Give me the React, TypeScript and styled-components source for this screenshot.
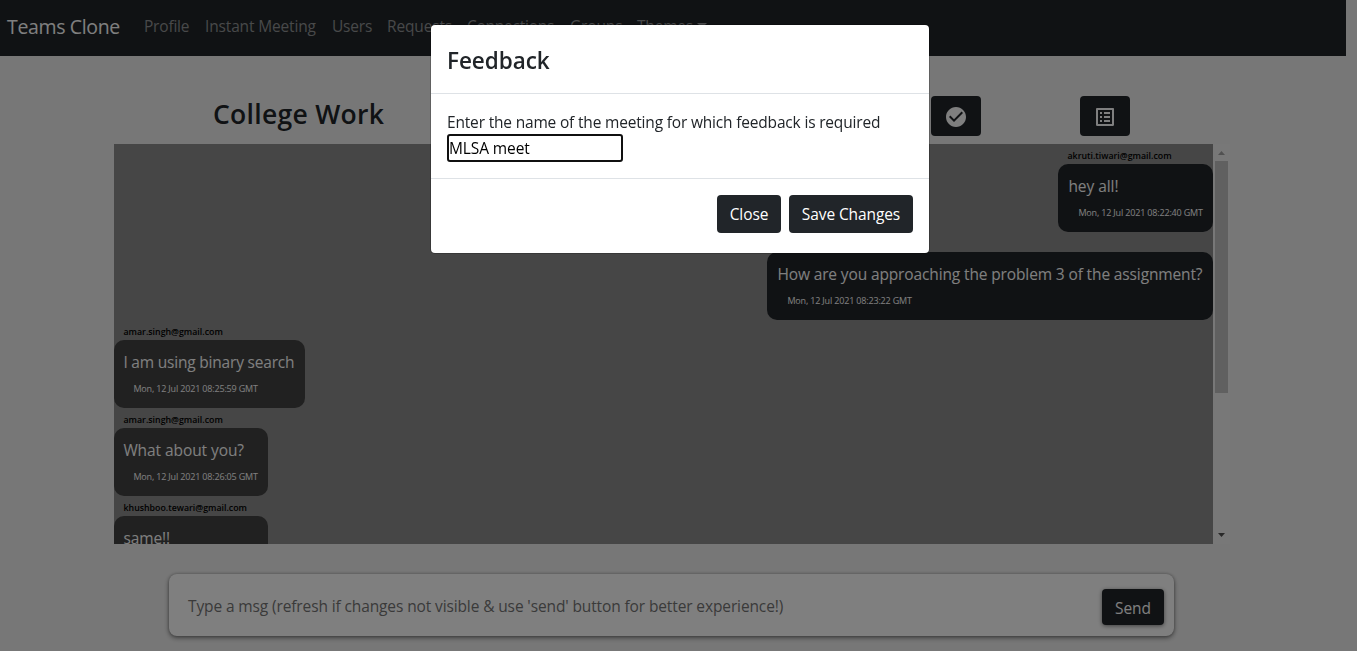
import React from "react";
import styled, { createGlobalStyle } from "styled-components";
import { MdCheckCircle, MdListAlt } from "react-icons/md";

const Global = createGlobalStyle`
  *, *::before, *::after { box-sizing: border-box; }
  html, body, #root { height: 100%; }
  body {
    margin: 0;
    overflow: hidden;
    background: #efefef;
    color: #212529;
    font: 400 15.5px/24px "Open Sans", "Noto Sans", sans-serif;
  }
  h2, h4, p { margin: 0; }
`;

const Page = styled.div`
  height: 100%;
  overflow: hidden;
`;

const Navbar = styled.nav`
  display: flex;
  align-items: center;
  width: 1346px;
  height: 56px;
  padding: 0 7px 4px;
  background: #212529;
`;

const Brand = styled.a`
  width: 129px;
  padding-top: 2px;
  font-size: 19.5px;
  letter-spacing: -0.35px;
  color: #fff;
  white-space: nowrap;
`;

const NavLink = styled.a<{ $width: number; $spacing?: number }>`
  display: flex;
  align-items: flex-start;
  width: ${(p) => p.$width}px;
  padding-left: 8px;
  letter-spacing: ${(p) => p.$spacing ?? 0}px;
  color: #909294;
  white-space: nowrap;
`;

const Caret = styled.span`
  margin: 9px 0 0 4px;
  border-top: 5px solid currentColor;
  border-left: 5px solid transparent;
  border-right: 5px solid transparent;
`;

const Content = styled.main`
  width: 1116px;
  margin-left: 114px;
`;

const GroupBar = styled.header`
  display: flex;
  height: 88px;
  padding: 40px 100px 8px 99px;
`;

const GroupName = styled.h2`
  flex: 1;
  font-size: 26.5px;
  font-weight: 600;
  line-height: 36px;
  letter-spacing: 0.3px;
`;

const IconButton = styled.button`
  display: flex;
  align-items: center;
  justify-content: center;
  width: 50px;
  height: 40px;
  padding: 2px 0 0;
  border: 0;
  border-radius: 4px;
  background: #212529;
  color: #fff;
  font-size: 24px;
  & + & { margin-left: 99px; }
`;

const Chat = styled.section`
  display: flex;
  height: 400px;
`;

const Messages = styled.div`
  flex: 1;
  height: 100%;
  overflow: hidden;
  background: #8c8c8c;
`;

const Message = styled.article<{ $own?: boolean; $width: number }>`
  width: ${(p) => p.$width}px;
  margin-left: ${(p) => (p.$own ? "auto" : "0")};
`;

const Sender = styled.p`
  height: 20px;
  padding-left: 9.5px;
  font-size: 8.8px;
  font-weight: 600;
  line-height: 25px;
  color: #000;
  white-space: nowrap;
`;

const Bubble = styled.div<{ $own?: boolean }>`
  height: 68px;
  padding: 10px 0 0 ${(p) => (p.$own ? 10.4 : 9.4)}px;
  border-radius: 10px;
  background: ${(p) => (p.$own ? "#212529" : "#424242")};
  color: #fff;
`;

const Body = styled.p<{ $spacing?: number }>`
  letter-spacing: ${(p) => p.$spacing ?? 0}px;
  white-space: nowrap;
`;

const Time = styled.p`
  padding-left: 10px;
  font-size: 9px;
  line-height: 30px;
  letter-spacing: -0.17px;
  white-space: nowrap;
`;

const Scrollbar = styled.div`
  display: flex;
  flex-direction: column;
  align-items: center;
  width: 17px;
  background: #f1f1f1;
`;

const Arrow = styled.svg`
  width: 17px;
  height: 17px;
  flex: none;
`;

const Thumb = styled.div`
  width: 13px;
  height: 232px;
  margin: 0 0 auto;
  background: #c1c1c1;
`;

const Composer = styled.form`
  display: flex;
  align-items: center;
  justify-content: space-between;
  width: 1005px;
  height: 62px;
  margin: 30px 0 0 55px;
  padding: 3px 10px 0 19px;
  border-radius: 8px;
  background: #fff;
  box-shadow: 0 2px 5px rgba(0, 0, 0, 0.45), 0 0 3px rgba(0, 0, 0, 0.25);
`;

const Placeholder = styled.span`
  padding-bottom: 2px;
  letter-spacing: -0.12px;
  color: #757575;
  white-space: nowrap;
`;

const SendButton = styled.button`
  width: 62px;
  height: 36px;
  padding: 3px 0 0;
  border: 0;
  border-radius: 4px;
  background: #212529;
  box-shadow: 0 1px 4px rgba(0, 0, 0, 0.5);
  color: #fff;
  font: inherit;
`;

const Backdrop = styled.div`
  position: fixed;
  inset: 0;
  padding: 25px 0 0 431px;
  background: rgba(0, 0, 0, 0.5);
`;

const Dialog = styled.section`
  width: 498px;
  height: 228px;
  border-radius: 4px;
  background: #fff;
  box-shadow: 0 0 0 1px rgba(0, 0, 0, 0.2);
`;

const DialogHeader = styled.header`
  height: 69px;
  padding: 18px 16px 0;
  border-bottom: 1px solid #dee2e6;
`;

const DialogTitle = styled.h4`
  font-size: 22.5px;
  font-weight: 600;
  line-height: 36px;
  letter-spacing: -0.05px;
`;

const DialogBody = styled.div`
  height: 84px;
  padding: 16px 16px 0;
`;

const Label = styled.label`
  display: block;
  letter-spacing: -0.18px;
  white-space: nowrap;
`;

const MeetingInput = styled.input`
  display: block;
  width: 176px;
  height: 28px;
  padding: 0;
  border: 2px solid #101010;
  border-radius: 3px;
  outline: 0;
  background: #fff;
  color: #000;
  font: inherit;
  letter-spacing: -0.1px;
`;

const DialogFooter = styled.footer`
  display: flex;
  justify-content: flex-end;
  gap: 8px;
  padding: 16px 16px 20px;
  border-top: 1px solid #dee2e6;
`;

const DialogButton = styled.button<{ $width: number }>`
  width: ${(p) => p.$width}px;
  height: 38px;
  padding: 0;
  border: 0;
  border-radius: 4px;
  background: #212529;
  color: #fff;
  font: inherit;
  letter-spacing: -0.1px;
  white-space: nowrap;
`;

const links = [
  { text: "Profile", width: 61, spacing: -0.2 },
  { text: "Instant Meeting", width: 127, spacing: -0.15 },
  { text: "Users", width: 55, spacing: -0.2 },
  { text: "Requests", width: 80, spacing: -0.15 },
  { text: "Connections", width: 103, spacing: -0.25 },
  { text: "Groups", width: 67, spacing: -0.15 },
];

const messages = [
  { from: "akruti.tiwari@gmail.com", text: "hey all!", time: "Mon, 12 Jul 2021 08:22:40 GMT", own: true, width: 155, spacing: -0.05 },
  { from: "akruti.tiwari@gmail.com", text: "How are you approaching the problem 3 of the assignment?", time: "Mon, 12 Jul 2021 08:23:22 GMT", own: true, width: 446, spacing: -0.13 },
  { from: "amar.singh@gmail.com", text: "I am using binary search", time: "Mon, 12 Jul 2021 08:25:59 GMT", own: false, width: 191, spacing: -0.2 },
  { from: "amar.singh@gmail.com", text: "What about you?", time: "Mon, 12 Jul 2021 08:26:05 GMT", own: false, width: 154, spacing: -0.08 },
  { from: "khushboo.tewari@gmail.com", text: "same!!", time: "", own: false, width: 154, spacing: -0.1 },
];

export default function App() {
  return (
    <Page>
      <Global />
      <Navbar>
        <Brand>Teams Clone</Brand>
        {links.map((l) => (
          <NavLink key={l.text} $width={l.width} $spacing={l.spacing}>{l.text}</NavLink>
        ))}
        <NavLink $width={90} $spacing={-0.2}>Themes<Caret /></NavLink>
      </Navbar>
      <Content>
        <GroupBar>
          <GroupName>College Work</GroupName>
          <IconButton aria-label="Mark done"><MdCheckCircle /></IconButton>
          <IconButton aria-label="Meeting notes"><MdListAlt /></IconButton>
        </GroupBar>
        <Chat>
          <Messages>
            {messages.map((m, i) => (
              <Message key={i} $own={m.own} $width={m.width}>
                <Sender>{m.from}</Sender>
                <Bubble $own={m.own}>
                  <Body $spacing={m.spacing}>{m.text}</Body>
                  <Time>{m.time}</Time>
                </Bubble>
              </Message>
            ))}
          </Messages>
          <Scrollbar>
            <Arrow viewBox="0 0 17 17"><path d="M5 11h7L8.5 7z" fill="#a3a3a3" /></Arrow>
            <Thumb />
            <Arrow viewBox="0 0 17 17"><path d="M5 6h7L8.5 10z" fill="#505050" /></Arrow>
          </Scrollbar>
        </Chat>
        <Composer>
          <Placeholder>Type a msg (refresh if changes not visible &amp; use 'send' button for better experience!)</Placeholder>
          <SendButton type="button">Send</SendButton>
        </Composer>
      </Content>
      <Backdrop>
        <Dialog role="dialog">
          <DialogHeader><DialogTitle>Feedback</DialogTitle></DialogHeader>
          <DialogBody>
            <Label htmlFor="meeting">Enter the name of the meeting for which feedback is required</Label>
            <MeetingInput id="meeting" defaultValue="MLSA meet" />
          </DialogBody>
          <DialogFooter>
            <DialogButton $width={64}>Close</DialogButton>
            <DialogButton $width={124}>Save Changes</DialogButton>
          </DialogFooter>
        </Dialog>
      </Backdrop>
    </Page>
  );
}
